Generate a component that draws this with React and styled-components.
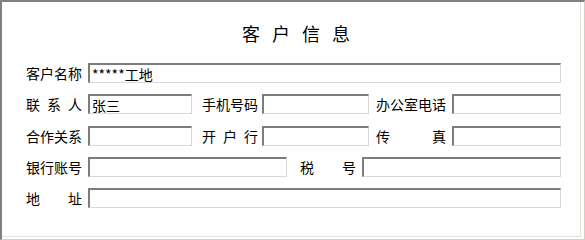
import React from 'react';
import styled, { createGlobalStyle } from 'styled-components';

const GlobalStyle = createGlobalStyle`
  html, body {
    margin: 0;
    padding: 0;
    background: #ffffff;
  }
  body {
    font-family: "Noto Sans CJK SC", "Liberation Sans", sans-serif;
    color: #000;
  }
`;

const Frame = styled.div`
  box-sizing: border-box;
  width: 585px;
  height: 240px;
  border-style: solid;
  border-width: 2px 1px 1px 2px;
  border-color: #808080 #d4d0c8 #d4d0c8 #808080;
  padding: 0 3px 2px 0;
  background: #fff;
`;

const Panel = styled.div`
  box-sizing: border-box;
  height: 100%;
  border-right: 1px solid #e2e2e2;
  border-bottom: 1px solid #e2e2e2;
  padding: 20px 0 0 24px;
`;

const Title = styled.h1`
  margin: 0 0 19px -24px;
  padding-left: 22px;
  font-size: 18px;
  line-height: 22px;
  font-weight: 400;
  letter-spacing: 12px;
  text-align: center;
`;

const Form = styled.div`
  display: flex;
  flex-direction: column;
  gap: 11.25px;
`;

const Row = styled.div`
  display: flex;
  align-items: center;
  height: 20px;
`;

const Label = styled.span`
  display: flex;
  justify-content: space-between;
  width: ${p => p.$w || 56}px;
  margin-left: ${p => p.$ml || 0}px;
  margin-right: ${p => p.$mr || 6}px;
  font-size: 14px;
  line-height: 20px;
  white-space: nowrap;
`;

const Input = styled.input`
  box-sizing: border-box;
  width: ${p => p.$w}px;
  height: 20px;
  margin: 0;
  padding: 0 2px;
  border-style: solid;
  border-width: 2px 1px 1px 2px;
  border-color: #7c7c7c #d8d8d8 #d8d8d8 #7c7c7c;
  border-radius: 0;
  background: #fff;
  font-family: "Noto Sans CJK SC", "Liberation Sans", sans-serif;
  font-size: 14px;
  line-height: 16px;
  color: #000;
  outline: none;
`;

function Field({ label, w, ml, mr }) {
  return (
    <Label $w={w} $ml={ml} $mr={mr}>
      {label.split('').map((ch, i) => (
        <span key={i}>{ch}</span>
      ))}
    </Label>
  );
}

export default function App() {
  return (
    <>
      <GlobalStyle />
      <Frame>
        <Panel>
          <Title>客户信息</Title>
          <Form>
            <Row>
              <Field label="客户名称" />
              <Input $w={473} defaultValue="*****工地" />
            </Row>
            <Row>
              <Field label="联系人" />
              <Input $w={104} defaultValue="张三" />
              <Field label="手机号码" ml={10} mr={4} />
              <Input $w={107} />
              <Field label="办公室电话" w={70} ml={7} />
              <Input $w={109} />
            </Row>
            <Row>
              <Field label="合作关系" />
              <Input $w={104} />
              <Field label="开户行" ml={10} mr={4} />
              <Input $w={107} />
              <Field label="传真" w={70} ml={7} />
              <Input $w={109} />
            </Row>
            <Row>
              <Field label="银行账号" />
              <Input $w={199} />
              <Field label="税号" ml={13} />
              <Input $w={199} />
            </Row>
            <Row>
              <Field label="地址" />
              <Input $w={473} />
            </Row>
          </Form>
        </Panel>
      </Frame>
    </>
  );
}
